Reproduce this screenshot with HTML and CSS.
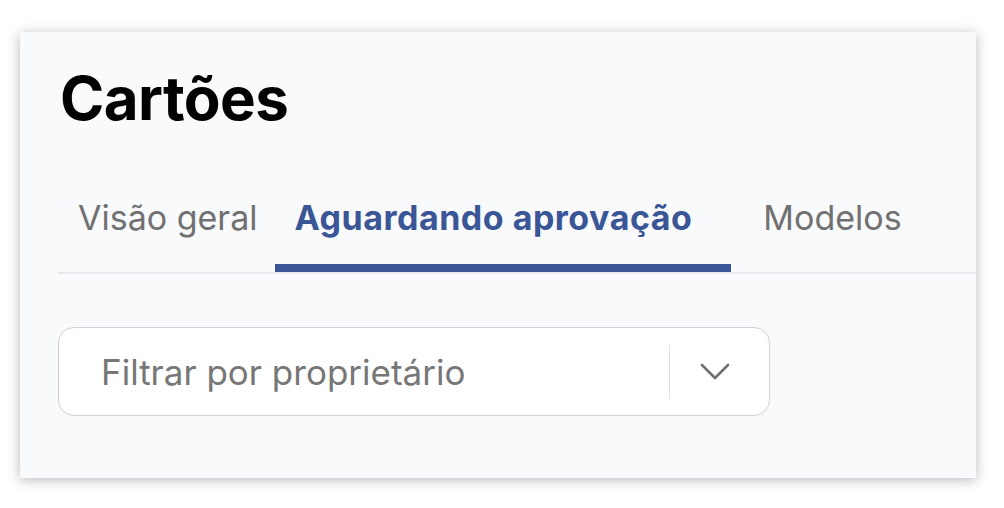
FILE: index.html
```html
<!DOCTYPE html>
<html lang="pt-BR">
<head>
<meta charset="utf-8">
<title>Cartões</title>
<link rel="stylesheet" href="styles.css">
</head>
<body>
<main class="card">
  <h1 class="title">Cartões</h1>
  <nav class="tabs">
    <a class="tab tab-first">Visão geral</a>
    <a class="tab tab-active">Aguardando aprovação</a>
    <a class="tab tab-last">Modelos</a>
  </nav>
  <div class="select">
    <span class="select-placeholder">Filtrar por proprietário</span>
    <span class="select-divider"></span>
    <span class="select-toggle">
      <svg width="30" height="18" viewBox="0 0 30 18" aria-hidden="true">
        <path d="M2 2 L15 15 L28 2" fill="none" stroke="#6f6f6f" stroke-width="2.6" stroke-linecap="round" stroke-linejoin="round"/>
      </svg>
    </span>
  </div>
</main>
</body>
</html>
```

FILE: styles.css
```css
html, body {
  margin: 0;
  padding: 0;
  background: #ffffff;
}

body {
  font-family: Inter, "Noto Sans", "Liberation Sans", sans-serif;
  padding: 32px 28px 30px 20px;
}

.card {
  box-sizing: border-box;
  height: 446px;
  background: #f9fafc;
  box-shadow: 0 2px 12px rgba(0, 0, 0, 0.28);
  padding-left: 38px;
  padding-top: 33px;
}

.title {
  margin: 0;
  padding-left: 2px;
  font-size: 60px;
  line-height: 66px;
  font-weight: 700;
  color: #000;
  letter-spacing: -0.6px;
}

.tabs {
  display: flex;
  margin-top: 59px;
  border-bottom: 2px solid #e7e9ec;
}

.tab {
  padding: 8px 19px 26px;
  font-size: 34px;
  line-height: 40px;
  color: #717171;
  border-bottom: 8px solid transparent;
}

.tab-first {
  padding-left: 20px;
  padding-right: 18px;
}

.tab-active {
  color: #3b5697;
  font-weight: 700;
  letter-spacing: 0.5px;
  border-bottom-color: #3b5697;
  padding-right: 39px;
}

.tab-last {
  padding-left: 32px;
}

.select {
  box-sizing: border-box;
  display: flex;
  align-items: center;
  width: 712px;
  height: 89px;
  margin-top: 53px;
  background: #ffffff;
  border: 1.5px solid #cfd2d6;
  border-radius: 16px;
}

.select-placeholder {
  flex: 1;
  padding-left: 42px;
  font-size: 35px;
  color: #777777;
}

.select-divider {
  width: 1.5px;
  height: 54px;
  background: #e0e0e0;
}

.select-toggle {
  box-sizing: border-box;
  display: flex;
  align-items: center;
  justify-content: center;
  width: 99px;
  padding-right: 10px;
  height: 100%;
}
```
